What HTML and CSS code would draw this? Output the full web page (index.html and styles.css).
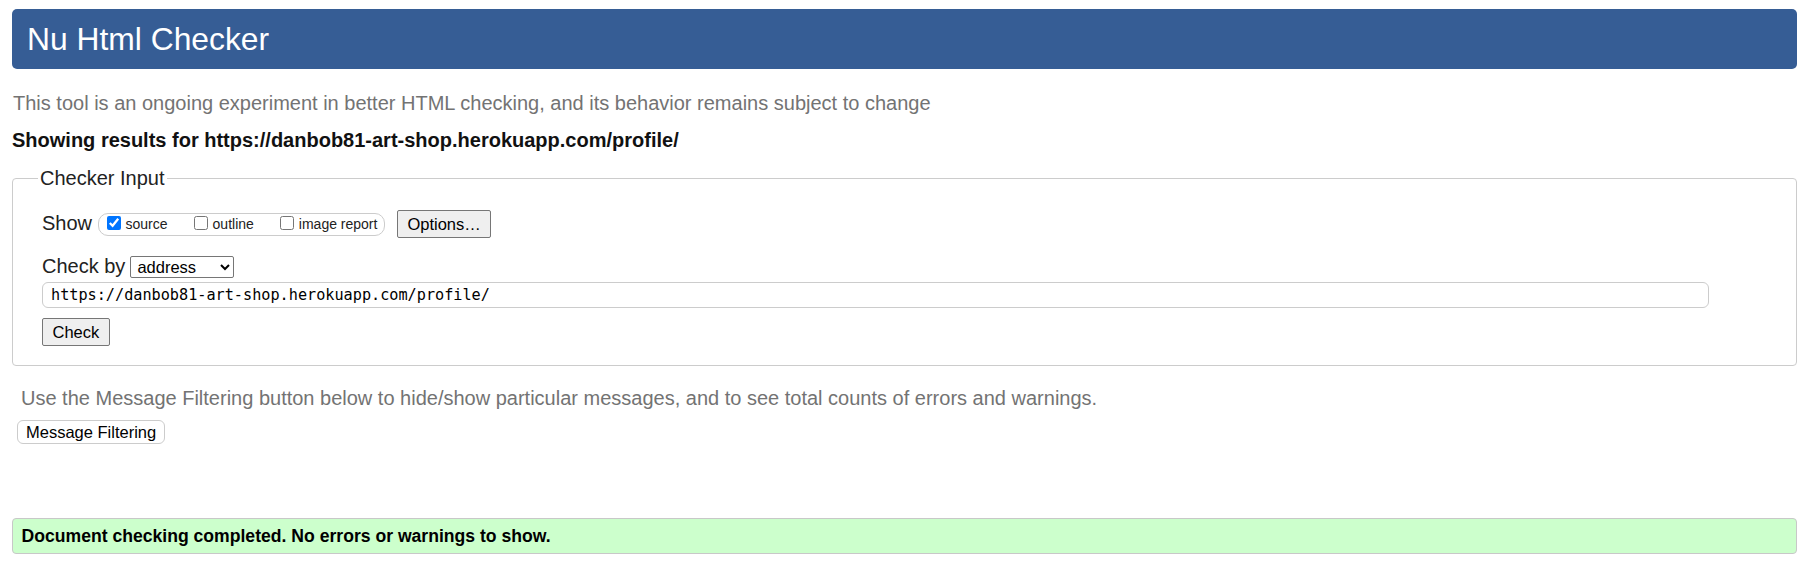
FILE: index.html
```html
<!DOCTYPE html>
<html lang="en">
<head>
<meta charset="utf-8">
<title>Nu Html Checker</title>
<link rel="stylesheet" href="styles.css">
</head>
<body>
<h1 class="page-title">Nu Html Checker</h1>
<p class="about">This tool is an ongoing experiment in better HTML checking, and its behavior remains subject to change</p>
<p class="results-for">Showing results for https://danbob81-art-shop.herokuapp.com/profile/</p>
<fieldset class="checker">
  <legend class="checker-legend">Checker Input</legend>
  <div class="checker-body">
    <div class="row row-show">
      <span class="row-label show-label">Show</span>
      <span class="show-group">
        <label class="opt"><input class="opt-box" type="checkbox" checked><span>source</span></label>
        <label class="opt"><input class="opt-box" type="checkbox"><span>outline</span></label>
        <label class="opt"><input class="opt-box" type="checkbox"><span>image report</span></label>
      </span>
      <button class="btn btn-options" type="button">Options…</button>
    </div>
    <div class="row row-checkby">
      <span class="row-label">Check by</span>
      <select class="by-select"><option>address</option></select>
    </div>
    <input class="url-input" type="url" value="https://danbob81-art-shop.herokuapp.com/profile/">
    <button class="btn btn-check" type="button">Check</button>
  </div>
</fieldset>
<p class="filter-note">Use the Message Filtering button below to hide/show particular messages, and to see total counts of errors and warnings.</p>
<button class="btn-filter" type="button">Message Filtering</button>
<div class="success">Document checking completed. No errors or warnings to show.</div>
</body>
</html>
```
FILE: styles.css
```css
html, body {
  background: #fff;
}
body {
  margin: 0;
  padding: 9px 14px 0 12px;
  font-family: "Liberation Sans", Arial, sans-serif;
  color: #222;
}
.page-title {
  margin: 0;
  height: 60px;
  line-height: 61px;
  padding-left: 15px;
  background: #365d95;
  color: #fff;
  font-size: 31.8px;
  font-weight: normal;
  border-radius: 5px;
}
.about {
  margin: 21.5px 0 0 1px;
  font-size: 20px;
  line-height: 24px;
  color: #737373;
}
.results-for {
  margin: 13.5px 0 0 0;
  font-size: 20px;
  line-height: 24px;
  font-weight: bold;
  color: #111;
}
.checker {
  margin: 14px 0 0 0;
  padding: 0 0 19px 0;
  border: 1px solid #ccc;
  border-radius: 4px;
  min-width: 0;
}
.checker-legend {
  margin-left: 25px;
  padding: 0 2px;
  font-size: 20px;
  line-height: 24px;
  color: #222;
}
.checker-body {
  padding-left: 29px;
}
.row {
  display: flex;
}
.row-show {
  margin-top: 20px;
  height: 28px;
  align-items: center;
}
.row-label {
  font-size: 20px;
  line-height: 24px;
  color: #222;
}
.show-label {
  margin-bottom: 3px;
}
.show-group {
  display: inline-flex;
  align-items: center;
  box-sizing: border-box;
  height: 23px;
  margin-left: 5.5px;
  padding: 0 7px 0 8px;
  border: 1px solid #ccc;
  border-radius: 10px;
  gap: 26px;
  font-size: 14px;
  line-height: 16px;
  color: #222;
}
.opt {
  display: flex;
  align-items: center;
  gap: 5px;
}
.opt-box {
  width: 14px;
  height: 14px;
  margin: 0 0 2px 0;
}
.btn {
  box-sizing: border-box;
  height: 28px;
  line-height: 26px;
  padding: 0 9.5px;
  font-family: "Liberation Sans", Arial, sans-serif;
  font-size: 16.5px;
  color: #000;
  background: #efefef;
  border: 1px solid #767676;
  border-radius: 2px;
}
.btn-options {
  margin-left: 11.5px;
}
.row-checkby {
  margin-top: 15.5px;
  align-items: baseline;
}
.by-select {
  margin-left: 5px;
  box-sizing: border-box;
  width: 104px;
  height: 22px;
  font-family: "Liberation Sans", Arial, sans-serif;
  font-size: 16.5px;
  color: #000;
  background: #fff;
  border: 1px solid #767676;
  border-radius: 2px;
  padding: 0 2px;
}
.url-input {
  display: block;
  box-sizing: border-box;
  width: calc(100% - 87px);
  height: 26px;
  margin-top: 4.3px;
  padding: 0 8px;
  font-family: "DejaVu Sans Mono", "Liberation Mono", monospace;
  font-size: 15.2px;
  color: #000;
  border: 1px solid #ccc;
  border-radius: 6px;
  background: #fff;
}
.btn-check {
  display: block;
  margin-top: 10.3px;
}
.filter-note {
  margin: 19.5px 0 0 9px;
  font-size: 20px;
  line-height: 24px;
  color: #737373;
}
.btn-filter {
  display: block;
  box-sizing: border-box;
  height: 24px;
  margin: 10.2px 0 0 5px;
  padding: 0 8px;
  font-family: "Liberation Sans", Arial, sans-serif;
  font-size: 16.5px;
  line-height: 22px;
  color: #000;
  background: #fff;
  border: 1px solid #ccc;
  border-radius: 6px;
}
.success {
  box-sizing: border-box;
  height: 36px;
  margin-top: 74.4px;
  padding-left: 8.5px;
  line-height: 34px;
  font-size: 17.6px;
  font-weight: bold;
  color: #000;
  background: #ccffcc;
  border: 1px solid #c8c8c8;
  border-radius: 4px;
}
```
